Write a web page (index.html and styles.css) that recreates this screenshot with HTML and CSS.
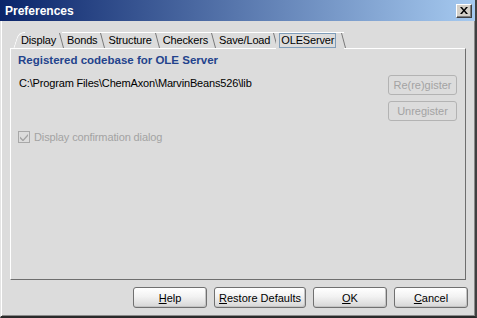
FILE: index.html
```html
<!DOCTYPE html>
<html lang="en">
<head>
  <meta charset="UTF-8" />
  <title>Preferences</title>
  <link rel="stylesheet" href="styles.css">
</head>
<body>
  <div class="pref-window">
    <div class="pref-title">
      <span class="pref-title-text">Preferences</span>
      <button class="pref-close" type="button">
        <svg width="8" height="7" viewBox="0 0 8 7">
          <path d="M0 0h2l2 2.5L6 0h2L5 3.5 8 7H6L4 4.5 2 7H0l3-3.5z" fill="#000"/>
        </svg>
      </button>
    </div>

    <div class="pref-tabs">
      <div class="tab tab-first">Display</div>
      <div class="tab">Bonds</div>
      <div class="tab">Structure</div>
      <div class="tab">Checkers</div>
      <div class="tab">Save/Load</div>
      <div class="tab tab-active"><span class="tab-focus">OLEServer</span></div>
    </div>

    <div class="pref-panel">
      <div class="panel-heading">Registered codebase for OLE Server</div>
      <div class="panel-row">
        <div class="panel-path">C:\Program Files\ChemAxon\MarvinBeans526\lib</div>
        <div class="panel-actions">
          <button class="btn-disabled" type="button" disabled>Re(re)gister</button>
          <button class="btn-disabled" type="button" disabled>Unregister</button>
        </div>
      </div>
      <label class="panel-check">
        <span class="check-box">
          <svg width="8" height="8" viewBox="0 0 8 8">
            <path d="M0 3.5l3 3 5-5.5v2L3 8.5 0 5.5z" fill="#a3a3a3"/>
          </svg>
        </span>
        Display confirmation dialog
      </label>
    </div>

    <div class="pref-footer">
      <button class="pref-button" type="button"><u>H</u>elp</button>
      <button class="pref-button" type="button"><u>R</u>estore Defaults</button>
      <button class="pref-button" type="button"><u>O</u>K</button>
      <button class="pref-button" type="button"><u>C</u>ancel</button>
    </div>
  </div>
</body>
</html>
```

FILE: styles.css
```css
* {
  margin: 0;
  padding: 0;
  box-sizing: border-box;
  font-family: 'Liberation Sans', Arial, sans-serif;
}

body {
  background-color: #dcdcdc;
}

.pref-window {
  width: 477px;
  height: 318px;
  background-color: #dcdcdc;
  border-left: 1px solid #e4e4e4;
  border-right: 2px solid #404040;
  border-bottom: 2px solid #2a2a2a;
  box-shadow: inset 1px 0 0 #ffffff, inset -1px -1px 0 #8a8a8a;
  display: flex;
  flex-direction: column;
}

.pref-title {
  height: 21px;
  margin-left: -1px;
  background: linear-gradient(to right, #0a246a, #a6caf0);
  display: flex;
  align-items: center;
  justify-content: space-between;
  padding: 0 3px 0 5px;
}

.pref-title-text {
  color: white;
  font-weight: bold;
  font-size: 12px;
}

.pref-close {
  width: 16px;
  height: 14px;
  background-color: #d4d0c8;
  border: 1px solid;
  border-color: #ffffff #404040 #404040 #ffffff;
  box-shadow: inset -1px -1px 0 #808080;
  display: flex;
  align-items: center;
  justify-content: center;
}

.pref-tabs {
  display: flex;
  margin: 11px 0 0 12px;
  height: 16px;
  position: relative;
  z-index: 1;
}

.tab {
  position: relative;
  height: 16px;
  padding: 1px 6px 0 5px;
  font-size: 11px;
  letter-spacing: -0.15px;
  color: #000;
  border-top: 1px solid #ffffff;
  line-height: 13px;
}

.tab::after {
  content: '';
  position: absolute;
  right: 2px;
  top: 0;
  width: 1px;
  height: 15px;
  background-color: #7a7a7a;
  transform: skewX(15deg);
  transform-origin: top;
}

.tab-first {
  border-top-color: transparent;
  padding-left: 8px;
}

.tab-first::before {
  content: '';
  position: absolute;
  left: 0;
  top: -1px;
  width: 6px;
  height: 16px;
  border-top: 1px solid #ffffff;
  border-left: 1px solid #ffffff;
  border-top-left-radius: 6px;
  transform: skewX(-18deg);
  transform-origin: bottom;
}

.tab-active {
  height: 17px;
  background-color: #dcdcdc;
  padding: 0 8px 0 3px;
}

.tab-focus {
  display: block;
  height: 15px;
  border: 1px solid #7f9db9;
  padding: 0 1px 0 1px;
  line-height: 12px;
}

.pref-panel {
  margin: 0 9px 0 9px;
  height: 232px;
  border-top: 1px solid #ffffff;
  border-left: 1px solid #ffffff;
  border-right: 1px solid #6e6e6e;
  border-bottom: 1px solid #6e6e6e;
  padding: 5px 8px 0 7px;
}

.panel-heading {
  color: #23438c;
  font-weight: bold;
  font-size: 11.5px;
  line-height: 13px;
}

.panel-row {
  display: flex;
  justify-content: space-between;
  margin-top: 8px;
}

.panel-path {
  font-size: 11px;
  letter-spacing: -0.16px;
  line-height: 13px;
  padding: 2px 0 0 1px;
  color: #000;
}

.panel-actions {
  display: flex;
  flex-direction: column;
  gap: 6px;
}

.btn-disabled {
  width: 69px;
  height: 20px;
  font-size: 11px;
  color: #a3a3a3;
  background-color: #dcdcdc;
  border: 1px solid #b3b3b3;
  border-radius: 3px;
}

.panel-check {
  display: flex;
  align-items: center;
  gap: 4px;
  margin-top: 10px;
  font-size: 11px;
  letter-spacing: -0.12px;
  color: #a3a3a3;
}

.check-box {
  width: 12px;
  height: 12px;
  border: 1px solid #a8a8a8;
  display: flex;
  align-items: center;
  justify-content: center;
}

.pref-footer {
  display: flex;
  justify-content: flex-end;
  gap: 7px;
  padding: 7px 7px 0 0;
}

.pref-button {
  width: 74px;
  height: 21px;
  font-size: 11px;
  color: #000;
  border: 1px solid #707070;
  border-radius: 3px;
  background: linear-gradient(to bottom, #ffffff, #f2f2f2 45%, #d6d6d6);
  box-shadow: inset -1px -1px 0 #c4c4c4;
}

.pref-button:nth-child(2) {
  width: 92px;
}
```
